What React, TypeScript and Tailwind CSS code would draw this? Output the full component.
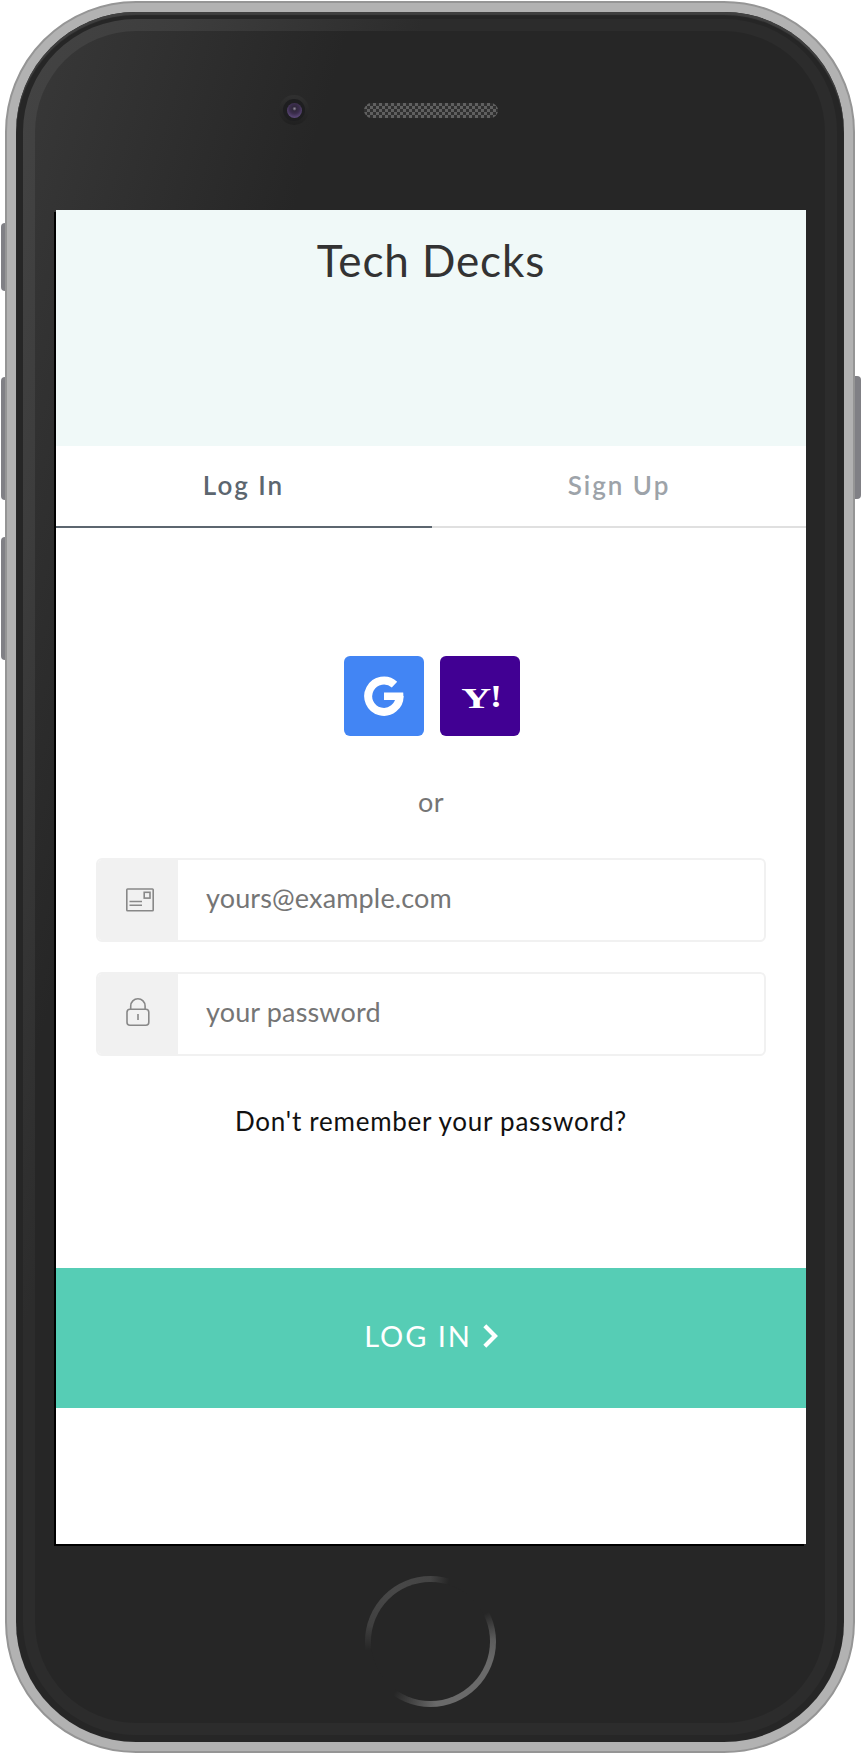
import React from "react";

function GoogleMark() {
  return (
    <svg width="40" height="40" viewBox="0 0 40 40" fill="none" aria-hidden="true">
      <path d="M30.5 8.6 A15.7 15.7 0 1 0 35.6 20" stroke="#fff" strokeWidth="8" />
      <path d="M20 16.6H39.2Q39.8 20.5 38.9 24H20Z" fill="#fff" />
    </svg>
  );
}

function YahooMark() {
  return (
    <svg width="80" height="80" viewBox="0 0 80 80" fill="#fff" aria-hidden="true" className="font-['Liberation_Serif',serif]">
      <text x="21.2" y="52" fontSize="29" textLength="30" lengthAdjust="spacingAndGlyphs" fontWeight="700">Y</text>
      <text x="50" y="51" fontSize="31" textLength="12" lengthAdjust="spacingAndGlyphs" fontWeight="700">!</text>
    </svg>
  );
}

function EmailIcon() {
  return (
    <svg width="28" height="24" viewBox="0 0 28 24" fill="none" stroke="#888" strokeWidth="1.6" aria-hidden="true" className="ml-[4px] -mt-[1px]">
      <rect x="0.8" y="1" width="26.4" height="21.8" rx="0.8" />
      <rect x="18.2" y="4.3" width="5.8" height="5.8" />
      <path d="M3.5 13.5H16M3.5 17.2H16" />
    </svg>
  );
}

function LockIcon() {
  return (
    <svg width="24" height="28" viewBox="0 0 24 28" fill="none" stroke="#888" strokeWidth="1.6" aria-hidden="true" className="-mt-[4px]">
      <rect x="1" y="11.2" width="21.8" height="16" rx="3" />
      <path d="M4.7 11V8A7.2 7.2 0 0 1 19.1 8V11M12 16V22" />
    </svg>
  );
}

function Field({ icon, type, placeholder }: { icon: React.ReactNode; type: string; placeholder: string }) {
  return (
    <label className="flex h-[84px] overflow-hidden rounded-[6px] border-2 border-[#f1f1f1] bg-white">
      <span className="flex w-[80px] shrink-0 items-center justify-center bg-[#f1f1f1]">{icon}</span>
      <input
        type={type}
        placeholder={placeholder}
        className="min-w-0 flex-1 bg-transparent pb-[3px] pl-[28px] text-[27px] tracking-[0.15px] outline-none placeholder:text-[#757575]"
      />
    </label>
  );
}

function Screen() {
  return (
    <main className="flex h-[1334px] w-[750px] flex-col bg-white shadow-[-2px_2px_0_#000]">
      <header className="flex h-[236px] flex-col items-center bg-[#f0f9f8] pt-[22px]">
        <h1 className="text-[44px] leading-[56px] tracking-[0.9px] text-[#333]">Tech Decks</h1>
      </header>
      <nav className="flex h-[82px] text-[26px] font-semibold leading-[76px] tracking-[2px]">
        <button className="w-[376px] border-b-2 border-[#5c666f] pb-[2px] pr-[1px] text-[#5c666f]">Log In</button>
        <button className="flex-1 border-b-2 border-[#e0e0e0] pb-[2px] text-[#9da3a9]">Sign Up</button>
      </nav>
      <form className="flex flex-1 flex-col px-10 pt-32">
        <div className="flex justify-center gap-4 pl-[2px]">
          <button type="button" className="flex size-20 items-center justify-center rounded-[6px] bg-[#4285f4]">
            <GoogleMark />
          </button>
          <button type="button" className="flex size-20 items-center justify-center rounded-[6px] bg-[#410093]">
            <YahooMark />
          </button>
        </div>
        <p className="mt-[46px] text-center text-[27px] leading-[40px] tracking-[0.4px] text-[#757575]">or</p>
        <div className="mt-[36px] flex flex-col gap-[30px]">
          <Field icon={<EmailIcon />} type="email" placeholder="yours@example.com" />
          <Field icon={<LockIcon />} type="password" placeholder="your password" />
        </div>
        <a className="mt-[45px] text-center text-[26px] leading-[40px] tracking-[0.75px] text-[#111]">Don't remember your password?</a>
      </form>
      <button className="flex h-[140px] items-center justify-center gap-[11px] bg-[#56cdb5] pb-[4px] text-[29px] tracking-[1.9px] text-white">
        <span className="leading-[40px]">LOG IN</span>
        <svg width="15" height="24" viewBox="0 0 15 24" fill="none" aria-hidden="true">
          <path d="M1.8 1.8L12 12L1.8 22.2" stroke="#fff" strokeWidth="4.2" />
        </svg>
      </button>
      <div className="h-[136px]" />
    </main>
  );
}

export default function App() {
  return (
    <div className="relative h-[1754px] w-[862px] overflow-hidden bg-white pl-[5px] pt-px font-['Lato',sans-serif]">
      <div className="absolute left-px top-[223px] h-[68px] w-[8px] rounded-l-[4px] bg-[#808085]" />
      <div className="absolute left-px top-[377px] h-[123px] w-[8px] rounded-l-[4px] bg-[#808085]" />
      <div className="absolute left-px top-[537px] h-[123px] w-[8px] rounded-l-[4px] bg-[#808085]" />
      <div className="absolute left-[852px] top-[376px] h-[123px] w-[9px] rounded-r-[4px] bg-[#808085]" />
      <div className="relative h-[1752px] w-[850px] rounded-[131px] border-2 border-[#959595] bg-[#b2b2b2] p-[9px]">
        <div className="h-[1730px] w-[828px] rounded-[120px] bg-[#262626] px-[7px] pt-[7px] shadow-[inset_0_3px_1px_#404040]">
          <div className="h-[1716px] w-[814px] rounded-[113px] bg-[linear-gradient(107deg,#444444_0%,#3d3d3d_12%,#2c2c2c_30%)] p-[12px]">
            <div className="flex h-[1692px] w-[790px] flex-col rounded-[101px] bg-[linear-gradient(107deg,#383838_0%,#262626_24%)] pl-[21px]">
              <div className="flex h-[179px] pl-[223px] pt-[64px]">
                <div className="flex size-[30px] items-center justify-center rounded-full bg-[linear-gradient(#303030,#202020)]">
                  <div className="flex size-[22px] items-center justify-center rounded-full bg-[#1e1e20]">
                    <div className="size-[15px] rounded-full bg-[radial-gradient(circle_at_50%_38%,#9a93a3_0%,#30283c_18%,#3b2d4d_42%,#594675_72%)]" />
                  </div>
                </div>
                <div className="ml-[55px] mt-[8px] h-[15px] w-[134px] rounded-full bg-[repeating-conic-gradient(#606060_0_25%,#303030_0_50%)] bg-[size:6px_6px]" />
              </div>
              <Screen />
              <div className="flex h-[179px] pl-[309px] pt-[32px]">
                <div className="flex size-[131px] items-center justify-center rounded-full bg-[conic-gradient(#444444_0deg,#262626_17deg,#262626_63deg,#5c5c5c_88deg,#6a6a6a_110deg,#6a6a6a_175deg,#262626_215deg,#262626_262deg,#404040_285deg,#484848_325deg,#444444_360deg)]">
                  <div className="size-[119px] rounded-full bg-[#262626]" />
                </div>
              </div>
            </div>
          </div>
        </div>
      </div>
    </div>
  );
}
